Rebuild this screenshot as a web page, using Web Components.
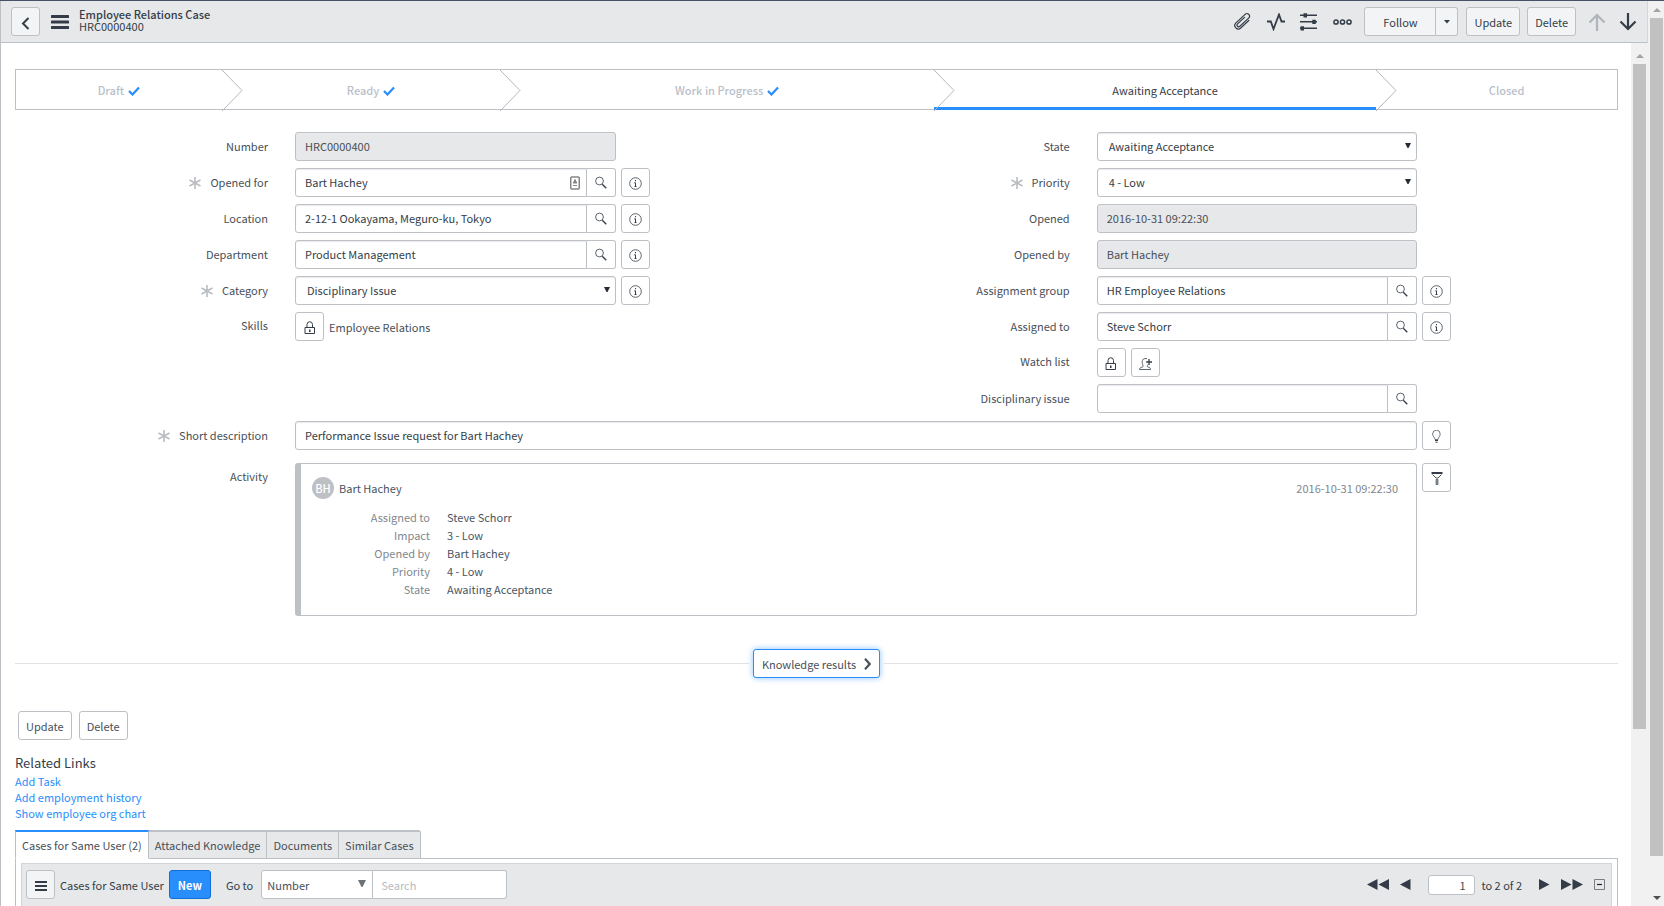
<!DOCTYPE html>
<html lang="en">
<head>
<meta charset="utf-8">
<title>Employee Relations Case HRC0000400</title>
<style>
  html, body { margin: 0; height: 100%; overflow: hidden; }
  body {
    --line: #bdc0c4;
    --shade: #e6e8ea;
    --blue: #278efc;
    --ink: #343d47;
    --text: #485059;
    font-family: "Noto Sans CJK SC", "Noto Sans", sans-serif;
    font-size: 11px;
    line-height: 16px;
    color: var(--text);
    background: #fff;
  }
</style>
</head>
<body>
<case-app></case-app>
<script>
const define = (name, html, setup) => {
  const template = document.createElement('template');
  template.innerHTML = html;
  customElements.define(name, class extends HTMLElement {
    constructor() {
      super();
      this.attachShadow({ mode: 'open' }).append(template.content.cloneNode(true));
    }
    connectedCallback() {
      if (setup && !this.ready) { this.ready = true; setup(this, this.shadowRoot); }
    }
  });
};

/* ---------- icons ---------- */
const stroke = (w, d) => `<path d="${d}" fill="none" stroke="currentColor" stroke-width="${w}"/>`;
const ICONS = {
  back: [27, 27, stroke(2, 'M16.500 9L11 14.500L16.500 20')],
  menu: [18, 14, '<path d="M1 0h16a1 1 0 0 1 0 3H1a1 1 0 0 1 0-3zM1 5.500h16a1 1 0 0 1 0 3H1a1 1 0 0 1 0-3zM1 11h16a1 1 0 0 1 0 3H1a1 1 0 0 1 0-3z" fill="currentColor"/>'],
  menuSmall: [12, 10, '<path d="M0 0h12v2H0zM0 4h12v2H0zM0 8h12v2H0z" fill="currentColor"/>'],
  clip: [20, 18, '<g transform="rotate(47 10 9)" fill="none" stroke="currentColor" stroke-width="1.200" stroke-linecap="round"><path d="M13.500 3v11a3.500 3.500 0 0 1-7 0V1.500a2.600 2.600 0 0 1 5.200 0v12a1.700 1.700 0 0 1-3.400 0V4"/></g>'],
  pulse: [18, 18, stroke(1.8, 'M0 8.500h3.800L6.500 16L12 1.500L14.500 8.500H18')],
  sliders: [18, 18, '<path d="M0 1.600h17v1.500H0zM0 8h17v1.500H0zM0 14.600h17v1.500H0z" fill="currentColor"/><path d="M3.500 .300h3.500v4.200H3.500zM12.300 6.700h3.500v4.200h-3.500zM.500 13.200H4v4.200H.500z" fill="currentColor"/>'],
  more: [19, 8, '<g fill="none" stroke="currentColor" stroke-width="1.500"><circle cx="3" cy="4" r="2.100"/><circle cx="9.500" cy="4" r="2.100"/><circle cx="16" cy="4" r="2.100"/></g>'],
  caret: [6, 4, '<path d="M0 0h6L3 3.500z" fill="currentColor"/>'],
  up: [18, 18, stroke(2.2, 'M9 18V2M1.500 9.500L9 2L16.500 9.500')],
  down: [18, 18, stroke(2.2, 'M9 0V16M1.500 8.500L9 16L16.500 8.500')],
  check: [12, 10, stroke(2.2, 'M1 5L4.500 8.500L11 1.500')],
  star: [12, 12, stroke(1.6, 'M6 0V12M.500 3L11.500 9M11.500 3L.500 9')],
  search: [12, 13, '<circle cx="4.500" cy="5" r="3.900" fill="none" stroke="currentColor" stroke-width=".8"/><path d="M7.300 8.200L11.300 12.300" stroke="currentColor" stroke-width="1.300"/>'],
  info: [13, 13, '<circle cx="6.500" cy="6.500" r="5.800" fill="none" stroke="currentColor" stroke-width=".8"/><path d="M6 3h1v1.200H6zM5 5.500h2V9.500h1v.600H5v-.600h1V6.200H5z" fill="currentColor"/>'],
  card: [10, 14, '<rect x=".750" y="1" width="8.500" height="12" rx="1" fill="#fff" stroke="#858585" stroke-width="1.500"/><path d="M4 3.500h2v2h1v2H3v-2h1zM3 9h4v1H3z" fill="#858585"/>'],
  lock: [12, 13, '<path d="M1 6.500h9.500v6H1z" fill="none" stroke="currentColor"/><path d="M3 6.500V3.500a2.750 2.750 0 0 1 5.500 0v3" fill="none" stroke="currentColor"/><path d="M5 8.500h1.500v2.500H5z" fill="currentColor"/>'],
  userAdd: [13, 12, '<path d="M9 6.500C8 8 8 8.500 9 9C11 9.500 11.500 10 11.500 11.500H.500C.500 10 1.500 9.500 3.500 9C4.500 8.500 4.200 7.800 3.600 6.500C2.800 4 3 .700 6 .600H8" fill="none" stroke="currentColor" stroke-width=".8"/><path d="M10 1v6M7.200 4H13" stroke="currentColor" stroke-width="1.300"/>'],
  bulb: [9, 13, '<path d="M3 9.500C3 7.500.600 6.500.600 4a3.700 3.700 0 0 1 7.600 0C8.200 6.500 6 7.500 6 9.500z" fill="none" stroke="currentColor" stroke-width=".7"/><path d="M3 10.500h3M3.500 12.200h2" stroke="currentColor"/>'],
  filter: [12, 13, '<path d="M.500 1h11" stroke="currentColor" stroke-width="2"/><path d="M1.500 2.500L5 6h2L10.500 2.500" fill="none" stroke="currentColor" stroke-width=".9"/><path d="M5 7.500h2v5H5z" fill="#9a9fa5" stroke="currentColor" stroke-width=".600"/>'],
  tri: [6, 5, '<path d="M0 0h6L3.500 5h-1z" fill="currentColor"/>'],
  triBig: [8, 7, '<path d="M0 0h8L4.500 7h-1z" fill="currentColor"/>'],
  next: [7, 12, stroke(2.2, 'M1 .800L5.700 6L1 11.200')],
  first: [22, 11, '<path d="M10.500 0v11L0 5.500zM22 0v11L11.500 5.500z" fill="currentColor"/>'],
  prev: [11, 11, '<path d="M10.500 0v11L0 5.500z" fill="currentColor"/>'],
  fwd: [11, 11, '<path d="M0 0v11L10.500 5.500z" fill="currentColor"/>'],
  last: [22, 11, '<path d="M0 0v11L10.500 5.500zM11.500 0v11L22 5.500z" fill="currentColor"/>'],
  collapse: [11, 11, '<path d="M.500.500h10v10H.500z" fill="none" stroke="#7b7f84"/><path d="M3 5.500h5" stroke="#222" stroke-width="1.200"/>'],
  thumbUp: [8, 4, '<path d="M0 4h8L4 0z" fill="currentColor"/>'],
  thumbDown: [8, 4, '<path d="M0 0h8L4 4z" fill="currentColor"/>']
};
define('ui-icon', '<style>:host{display:inline-flex;flex:none}svg{display:block}</style>', (host, root) => {
  const [w, h, body] = ICONS[host.getAttribute('name')];
  root.innerHTML += `<svg width="${w}" height="${h}" viewBox="0 0 ${w} ${h}" aria-hidden="true">${body}</svg>`;
});

/* ---------- button ---------- */
define('ui-button', `
<style>
  :host { display: inline-flex; flex: none; height: 29px; min-width: 29px; }
  button {
    flex: 1; display: flex; align-items: center; justify-content: center; gap: 8px;
    box-sizing: border-box; margin: 0; padding: 0 7px; border: 1px solid var(--line); border-radius: 3px;
    background: var(--button-bg, #fff); color: inherit; font: inherit; cursor: pointer;
  }
  :host([icon]) button { padding: 0; color: var(--ink); }
  :host([icon]:not([join])) button { padding-top: 2px; }
  :host([join="left"]) button { border-radius: 3px 0 0 3px; }
  :host([join="right"]) button { border-radius: 0 3px 3px 0; border-left-width: 0; }
  :host([kind="primary"]) button { background: var(--blue); border-color: #0f6fd6; color: #fff; font-weight: 700; padding: 0 8px; }
  :host([kind="focus"]) button { border-color: var(--blue); box-shadow: 0 0 6px #8cc2fd; padding: 0 8px; }
  :host([kind="plain"]) { height: auto; min-width: 0; }
  :host([kind="plain"]) button { border: 0; background: none; padding: 0; color: inherit; }
</style>
<button type="button"><slot></slot></button>`, (host, root) => {
  const label = host.getAttribute('label');
  if (label) root.querySelector('button').setAttribute('aria-label', label);
});

/* ---------- scroll bar ---------- */
define('ui-scrollbar', `
<style>
  :host { display: flex; flex-direction: column; flex: none; box-sizing: border-box; width: 16px; padding-left: 2px; background: #f1f1f1; color: #505050; }
  .end { flex: none; width: 13px; height: 17px; display: flex; align-items: center; justify-content: center; }
  .end:first-of-type { color: #a3a3a3; }
  .thumb { width: 13px; background: #c1c1c1; flex: var(--thumb) 1 0px; }
  .rest { flex: var(--rest) 1 0px; }
  :host([open-end]) .end:last-of-type { display: none; }
</style>
<div class="end"><ui-icon name="thumbUp"></ui-icon></div><div class="thumb"></div><div class="rest"></div>
<div class="end"><ui-icon name="thumbDown"></ui-icon></div>`);

/* ---------- header ---------- */
define('case-header', `
<style>
  :host { display: flex; align-items: center; box-sizing: border-box; height: 42px; flex: none; padding: 0 10px;
    background: var(--shade); border-bottom: 1px solid var(--line); border-right: 1px solid #d5d7da;
    color: var(--ink); --button-bg: #f2f4f5; }
  .menu { margin: 0 10px 0 11px; }
  h1 { margin: 0; padding-bottom: 3px; flex: 1; font-size: 11px; line-height: 12px; font-weight: 400; }
  h1 strong { display: block; font-weight: 500; }
  .tools { display: flex; align-items: center; gap: 15px; margin-right: 12px; }
  .pair { display: flex; margin-right: 8px; }
  .pair ui-button:first-child { width: 72px; }
  .pair ui-button:last-child { width: 22px; min-width: 22px; }
  .nav { display: flex; gap: 13px; margin-left: 12px; }
  .nav > :first-child { color: #b1b5ba; }
  .del { margin-left: 7px; }
</style>
<ui-button icon label="Back"><ui-icon name="back"></ui-icon></ui-button>
<ui-button class="menu" kind="plain" label="Menu"><ui-icon name="menu"></ui-icon></ui-button>
<h1><strong>Employee Relations Case</strong>HRC0000400</h1>
<div class="tools">
  <ui-button kind="plain" label="Attachments"><ui-icon name="clip"></ui-icon></ui-button>
  <ui-button kind="plain" label="Activity stream"><ui-icon name="pulse"></ui-icon></ui-button>
  <ui-button kind="plain" label="Personalize form"><ui-icon name="sliders"></ui-icon></ui-button>
  <ui-button kind="plain" label="More options"><ui-icon name="more"></ui-icon></ui-button>
</div>
<div class="pair"><ui-button join="left">Follow</ui-button><ui-button join="right" icon label="Follow options"><ui-icon name="caret"></ui-icon></ui-button></div>
<ui-button>Update</ui-button><ui-button class="del">Delete</ui-button>
<div class="nav">
  <ui-button kind="plain" label="Previous record"><ui-icon name="up"></ui-icon></ui-button>
  <ui-button kind="plain" label="Next record"><ui-icon name="down"></ui-icon></ui-button>
</div>`);

/* ---------- process flow ---------- */
define('flow-step', `
<style>
  :host { display: flex; position: relative; box-sizing: border-box; align-items: center; justify-content: center; gap: 4px;
    padding-left: 20px; color: #b8c0cb; font-weight: 500; }
  :host(:first-child) { padding-left: 0; }
  :host([state="current"]) { color: var(--ink); font-weight: 400; box-shadow: inset 0 -2px var(--blue), 0 1px var(--blue); }
  ui-icon { display: none; color: var(--blue); padding-top: 2px; }
  :host([state="done"]) ui-icon { display: inline-flex; }
  svg { position: absolute; left: 100%; top: 0; z-index: 1; }
  :host(:last-child) svg { display: none; }
</style>
<slot></slot><ui-icon name="check"></ui-icon>
<svg width="21" height="41" viewBox="0 0 21 41"><path d="M0 0L20 20.500L0 41" fill="none" stroke="#b4b7bc"/></svg>`);
define('process-flow', `
<style>:host { display: grid; grid-template-columns: 206fr 279fr 434fr 443fr 241fr; box-sizing: border-box; height: 41px; border: 1px solid var(--line); }</style><slot></slot>`);

/* ---------- form row: label, control, action buttons ---------- */
define('case-field', `
<style>
  :host { display: grid; grid-template-columns: 253fr 27px 321fr 201fr; height: 29px; }
  :host([wide]) { grid-template-columns: 253fr 27px 1122fr 201fr; }
  .name { display: flex; justify-content: flex-end; align-items: center; gap: 9px; white-space: nowrap; }
  .name ui-icon { color: #b9bcc0; }
  label { padding-bottom: 2px; }
  .box { grid-column: 3; display: flex; min-width: 0; position: relative; }
  input, select { flex: 1; min-width: 0; box-sizing: border-box; margin: 0; padding: 0 9px 2px; font: inherit; color: var(--ink);
    border: 1px solid var(--line); border-radius: 3px; background: #fff; box-shadow: inset 0 1px 1px #ececee; outline: 0; }
  input[readonly].locked { background: var(--shade); color: #4a4f55; }
  select { appearance: none; padding: 0 11px 2px; }
  .arrow { position: absolute; right: 6px; top: 11px; color: #222b36; pointer-events: none; }
  .joined { border-radius: 3px 0 0 3px; }
  .card { position: absolute; right: 36px; top: 8px; }
  .side { margin-left: 5px; display: flex; }
</style>
<div class="name"><label for="control"></label></div>
<div class="box"></div>
<div class="side"><slot name="side"></slot></div>`, (host, root) => {
  const get = n => host.getAttribute(n);
  const name = root.querySelector('.name'), box = root.querySelector('.box');
  name.querySelector('label').textContent = get('label');
  if (host.hasAttribute('required')) name.insertAdjacentHTML('afterbegin', '<ui-icon name="star"></ui-icon>');
  const kind = get('kind'), value = get('value') || '';
  if (kind === 'select') {
    box.innerHTML = `<select id="control"><option>${value}</option></select><ui-icon class="arrow" name="tri"></ui-icon>`;
  } else if (kind === 'reference') {
    box.innerHTML = `<input id="control" class="joined" value="${value}">` +
      (host.hasAttribute('card') ? '<ui-icon class="card" name="card"></ui-icon>' : '') +
      '<ui-button icon join="right" label="Look up"><ui-icon name="search"></ui-icon></ui-button>';
  } else {
    box.innerHTML = `<input id="control" value="${value}">`;
    if (kind === 'locked') { box.firstChild.readOnly = true; box.firstChild.className = 'locked'; }
  }
  if (host.hasAttribute('info')) {
    root.querySelector('.side').innerHTML = '<ui-button icon label="Preview record"><ui-icon name="info"></ui-icon></ui-button>';
  }
});
/* Same row, with its content passed in instead of an input. */
define('case-row', `
<style>
  :host { display: grid; grid-template-columns: 253fr 27px 522fr; min-height: 29px; }
  :host([wide]) { grid-template-columns: 253fr 27px 1122fr 201fr; }
  .name { text-align: right; padding-top: 5px; }
  .body { grid-column: 3; display: flex; align-items: center; gap: 5px; }
  :host([wide]) .body { display: block; }
  .side { margin-left: 5px; }
</style>
<div class="name"></div><div class="body"><slot></slot></div><div class="side"><slot name="side"></slot></div>`,
  (host, root) => {
    root.querySelector('.name').textContent = host.getAttribute('label');
    if (!host.hasAttribute('wide')) root.querySelector('.side').remove();
  });

define('case-form', `
<style>
  :host { display: block; }
  .halves { display: grid; grid-template-columns: 802fr 801fr; align-items: start; }
  .half { display: grid; gap: 7px; }
  .wide { margin-top: 8px; }
  .activity { margin-top: 13px; }
</style>
<div class="halves">
  <div class="half">
    <case-field label="Number" kind="locked" value="HRC0000400"></case-field>
    <case-field label="Opened for" kind="reference" value="Bart Hachey" required card info></case-field>
    <case-field label="Location" kind="reference" value="2-12-1 Ookayama, Meguro-ku, Tokyo" info></case-field>
    <case-field label="Department" kind="reference" value="Product Management" info></case-field>
    <case-field label="Category" kind="select" value="Disciplinary Issue" required info></case-field>
    <case-row label="Skills"><ui-button icon label="Unlock skills"><ui-icon name="lock"></ui-icon></ui-button><span>Employee Relations</span></case-row>
  </div>
  <div class="half">
    <case-field label="State" kind="select" value="Awaiting Acceptance"></case-field>
    <case-field label="Priority" kind="select" value="4 - Low" required></case-field>
    <case-field label="Opened" kind="locked" value="2016-10-31 09:22:30"></case-field>
    <case-field label="Opened by" kind="locked" value="Bart Hachey"></case-field>
    <case-field label="Assignment group" kind="reference" value="HR Employee Relations" info></case-field>
    <case-field label="Assigned to" kind="reference" value="Steve Schorr" info></case-field>
    <case-row label="Watch list"><ui-button icon label="Unlock watch list"><ui-icon name="lock"></ui-icon></ui-button><ui-button icon label="Add me"><ui-icon name="userAdd"></ui-icon></ui-button></case-row>
    <case-field label="Disciplinary issue" kind="reference"></case-field>
  </div>
</div>
<case-field class="wide" wide label="Short description" value="Performance Issue request for Bart Hachey" required>
  <ui-button slot="side" icon label="Suggestion"><ui-icon name="bulb"></ui-icon></ui-button>
</case-field>
<case-row class="activity" wide label="Activity">
  <activity-entry></activity-entry>
  <ui-button slot="side" icon label="Filter activity"><ui-icon name="filter"></ui-icon></ui-button>
</case-row>`);

define('activity-entry', `
<style>
  :host { display: block; box-sizing: border-box; padding: 13px 18px 17px 11px; border: 1px solid var(--line); border-left-width: 6px; border-radius: 3px; color: #485563; }
  header { display: flex; align-items: center; gap: 5px; }
  .avatar { width: 22px; height: 22px; border-radius: 50%; background: #bdc0c4; color: #fff; text-align: center; line-height: 22px; font-weight: 500; }
  time { margin-left: auto; color: #81878e; }
  dl { margin: 9px 0 0; display: grid; grid-template-columns: 118px 1fr; column-gap: 17px; line-height: 18px; }
  dt { text-align: right; color: #81878e; }
  dd { margin: 0; }
</style>
<header><span class="avatar">BH</span><span>Bart Hachey</span><time>2016-10-31 09:22:30</time></header>
<dl>
  <dt>Assigned to</dt><dd>Steve Schorr</dd><dt>Impact</dt><dd>3 - Low</dd><dt>Opened by</dt><dd>Bart Hachey</dd>
  <dt>Priority</dt><dd>4 - Low</dd><dt>State</dt><dd>Awaiting Acceptance</dd>
</dl>`);

/* ---------- related links ---------- */
define('related-links', `
<style>
  :host { display: block; }
  h2 { margin: 0; font-size: 13px; line-height: 20px; font-weight: 400; color: var(--ink); }
  a { display: block; width: fit-content; color: var(--blue); text-decoration: none; }
</style>
<h2>Related Links</h2><a href="#task">Add Task</a><a href="#history">Add employment history</a><a href="#chart">Show employee org chart</a>`);

/* ---------- related lists ---------- */
define('related-lists', `
<style>
  :host { display: flex; flex-direction: column; }
  .tabs { display: flex; position: relative; z-index: 1; }
  .tabs button { box-sizing: border-box; height: 29px; margin: 0; padding: 0 6px; font: inherit; color: var(--text);
    border: 0 solid var(--line); border-width: 2px 1px 1px 0; background: var(--shade); }
  .tabs button:last-child { border-top-right-radius: 3px; }
  .tabs button[aria-selected="true"] { background: #fff; border-left-width: 1px; border-top-color: var(--blue); border-bottom-color: #fff; }
  .panel { margin-top: -1px; padding: 4px 5px 0; border: 1px solid var(--line); border-bottom: 0; }
  .bar { display: flex; align-items: center; margin: 0; padding: 6px 6px 11px 4px; box-sizing: border-box;
    background: var(--shade); border: 1px solid #d0d5d9; border-bottom: 0; color: var(--ink); --button-bg: #f2f4f5; }
  h3 { margin: 0 5px; font: inherit; }
  .goto { margin: 0 8px 0 15px; }
  .pick { display: flex; position: relative; width: 112px; height: 29px; }
  .pick ui-icon { position: absolute; right: 7px; top: 10px; color: #6b7278; pointer-events: none; }
  select, input { box-sizing: border-box; margin: 0; height: 29px; font: inherit; color: var(--text); border: 1px solid var(--line); background: #fff; outline: 0; }
  select { flex: 1; appearance: none; padding: 0 5px; border-radius: 3px 0 0 3px; }
  .find { width: 134px; padding: 0 8px; border-left: 0; border-radius: 0 3px 3px 0; }
  ::placeholder { color: #b6bbc1; opacity: 1; }
  .page { width: 47px; height: 20px; padding: 0 8px; text-align: right; border-radius: 3px; margin-left: 6px; }
  .pager { margin-left: auto; display: flex; align-items: center; gap: 11px; }
  .count { margin: 0 6px 0 -4px; }
</style>
<div class="tabs" role="tablist">
  <button type="button" role="tab" aria-selected="true">Cases for Same User (2)</button><button type="button" role="tab">Attached Knowledge</button><button type="button" role="tab">Documents</button><button type="button" role="tab">Similar Cases</button>
</div>
<div class="panel"><div class="bar">
  <ui-button icon label="List menu"><ui-icon name="menuSmall"></ui-icon></ui-button>
  <h3>Cases for Same User</h3>
  <ui-button kind="primary">New</ui-button>
  <label class="goto" for="field">Go to</label>
  <span class="pick"><select id="field"><option>Number</option></select><ui-icon name="triBig"></ui-icon></span>
  <input class="find" placeholder="Search" aria-label="Search">
  <div class="pager">
    <ui-button kind="plain" label="First page"><ui-icon name="first"></ui-icon></ui-button>
    <ui-button kind="plain" label="Previous page"><ui-icon name="prev"></ui-icon></ui-button>
    <input class="page" value="1" aria-label="Row">
    <span class="count">to 2 of 2</span>
    <ui-button kind="plain" label="Next page"><ui-icon name="fwd"></ui-icon></ui-button>
    <ui-button kind="plain" label="Last page"><ui-icon name="last"></ui-icon></ui-button>
    <ui-button kind="plain" label="Collapse list"><ui-icon name="collapse"></ui-icon></ui-button>
  </div>
</div></div>`);

/* ---------- page ---------- */
define('case-app', `
<style>
  :host { display: flex; box-sizing: border-box; height: 100vh; border-top: 1px solid #485166; --thumb: 838; --rest: 33; }
  main { flex: 1; min-width: 0; display: flex; flex-direction: column; border-left: 1px solid var(--line); }
  .view { flex: 1; min-height: 0; display: flex; }
  .content { flex: 1; min-width: 0; overflow: hidden; padding: 26px 13px 0 14px; }
  case-form { margin-top: 22px; }
  .knowledge { display: flex; align-items: center; gap: 4px; margin-top: 33px; }
  .knowledge::before, .knowledge::after { content: ""; flex: 1; height: 1px; background: #e0e2e5; }
  .actions { display: flex; gap: 7px; margin: 33px 3px 13px; }
  related-lists { margin-top: 9px; }
  .inner { --thumb: 665; --rest: 177; width: 17px; padding-top: 4px; }
</style>
<main>
  <case-header></case-header>
  <div class="view">
    <div class="content">
      <process-flow>
        <flow-step state="done">Draft</flow-step><flow-step state="done">Ready</flow-step>
        <flow-step state="done">Work in Progress</flow-step><flow-step state="current">Awaiting Acceptance</flow-step>
        <flow-step>Closed</flow-step>
      </process-flow>
      <case-form></case-form>
      <div class="knowledge"><ui-button kind="focus">Knowledge results <ui-icon name="next"></ui-icon></ui-button></div>
      <div class="actions"><ui-button>Update</ui-button><ui-button>Delete</ui-button></div>
      <related-links></related-links>
      <related-lists></related-lists>
    </div>
    <ui-scrollbar class="inner" open-end></ui-scrollbar>
  </div>
</main>
<ui-scrollbar></ui-scrollbar>`);
</script>
</body>
</html>
